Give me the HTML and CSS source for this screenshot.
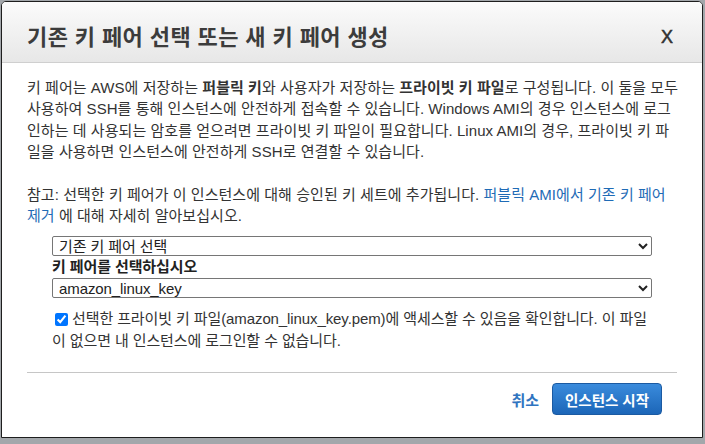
FILE: index.html
```html
<!DOCTYPE html>
<html lang="ko">
<head>
<meta charset="utf-8">
<title>키 페어</title>
<link rel="stylesheet" href="styles.css">
</head>
<body>
<div class="dialog">
  <div class="header">
    <h1 class="title">기존 키 페어 선택 또는 새 키 페어 생성</h1>
    <span class="close">X</span>
  </div>
  <div class="content">
    <p class="text">키 페어는 AWS에 저장하는 <b>퍼블릭 키</b>와 사용자가 저장하는 <b>프라이빗 키 파일</b>로 구성됩니다. 이 둘을 모두<br>사용하여 SSH를 통해 인스턴스에 안전하게 접속할 수 있습니다. Windows AMI의 경우 인스턴스에 로그<br>인하는 데 사용되는 암호를 얻으려면 프라이빗 키 파일이 필요합니다. Linux AMI의 경우, 프라이빗 키 파<br>일을 사용하면 인스턴스에 안전하게 SSH로 연결할 수 있습니다.</p>
    <p class="text">참고: 선택한 키 페어가 이 인스턴스에 대해 승인된 키 세트에 추가됩니다. <a class="link" href="#">퍼블릭 AMI에서 기존 키 페어<br>제거</a> 에 대해 자세히 알아보십시오.</p>
    <div class="form">
      <select class="select"><option>기존 키 페어 선택</option></select>
      <label class="label">키 페어를 선택하십시오</label>
      <select class="select"><option>amazon_linux_key</option></select>
      <label class="check"><input class="checkbox" type="checkbox" checked>선택한 프라이빗 키 파일(amazon_linux_key.pem)에 액세스할 수 있음을 확인합니다. 이 파일<br>이 없으면 내 인스턴스에 로그인할 수 없습니다.</label>
    </div>
  </div>
  <div class="footer">
    <a class="cancel" href="#">취소</a>
    <button class="primary" type="button">인스턴스 시작</button>
  </div>
</div>
</body>
</html>
```
FILE: styles.css
```css
html, body {
  margin: 0;
  padding: 0;
}
body {
  background: #a3a7ab;
  font-family: "Liberation Sans", "Noto Sans CJK KR", sans-serif;
  width: 705px;
  height: 444px;
  overflow: hidden;
}
.dialog {
  margin: 1px 0 0 1px;
  width: 700px;
  height: 435px;
  border: 1px solid #1e1e1e;
  border-radius: 5px 5px 0 0;
  background: #fff;
  overflow: hidden;
  box-sizing: content-box;
}
.header {
  height: 54px;
  padding: 6px 29px 0 25px;
  border-bottom: 1px solid #cfcfcf;
  background: linear-gradient(#fbfbfb, #e7e7e7);
  display: flex;
  align-items: center;
  justify-content: space-between;
}
.title {
  margin: 0;
  font-size: 22px;
  letter-spacing: 0.4px;
  font-weight: bold;
  color: #3c3c3c;
}
.close {
  margin-top: 4px;
  font-size: 18px;
  color: #333;
  line-height: 1;
  -webkit-text-stroke: 0.5px #333;
}
.content {
  padding: 14px 25px 0;
  font-size: 15px;
  letter-spacing: 0.05px;
  line-height: 21.4px;
  color: #333;
}
.text {
  margin: 0;
  white-space: nowrap;
}
.text + .text {
  margin-top: 21px;
}
.link {
  color: #1f6bb6;
  text-decoration: none;
}
.form {
  margin: 10px 0 0 25px;
  width: 600px;
  letter-spacing: -0.1px;
}
.select {
  display: block;
  width: 600px;
  height: 20px;
  margin: 0;
  padding: 0 2px;
  font-family: inherit;
  font-size: 15px;
  letter-spacing: -0.1px;
  color: #222;
  border: 1px solid #767676;
  border-radius: 2px;
  background: #fff;
}
.label {
  display: block;
  font-weight: bold;
  line-height: 22px;
  color: #222;
}
.check {
  display: block;
  margin-top: 10px;
  line-height: 22px;
  white-space: nowrap;
}
.checkbox {
  width: 13px;
  height: 13px;
  margin: 0 4px 0 3px;
  vertical-align: -2px;
}
.footer {
  margin: 20px 25px 0;
  border-top: 1px solid #c6c6c6;
  padding: 10px 15px 0 0;
  display: flex;
  justify-content: flex-end;
  align-items: center;
  gap: 13px;
}
.cancel {
  color: #2f74c0;
  font-size: 15px;
  font-weight: bold;
  text-decoration: none;
}
.primary {
  height: 32px;
  width: 110px;
  padding: 0;
  border: 1px solid #1b5aa2;
  border-radius: 4px;
  background: linear-gradient(#3a8bdc, #1c66b8);
  color: #fff;
  font-family: inherit;
  font-size: 14.5px;
  font-weight: bold;
}
```
